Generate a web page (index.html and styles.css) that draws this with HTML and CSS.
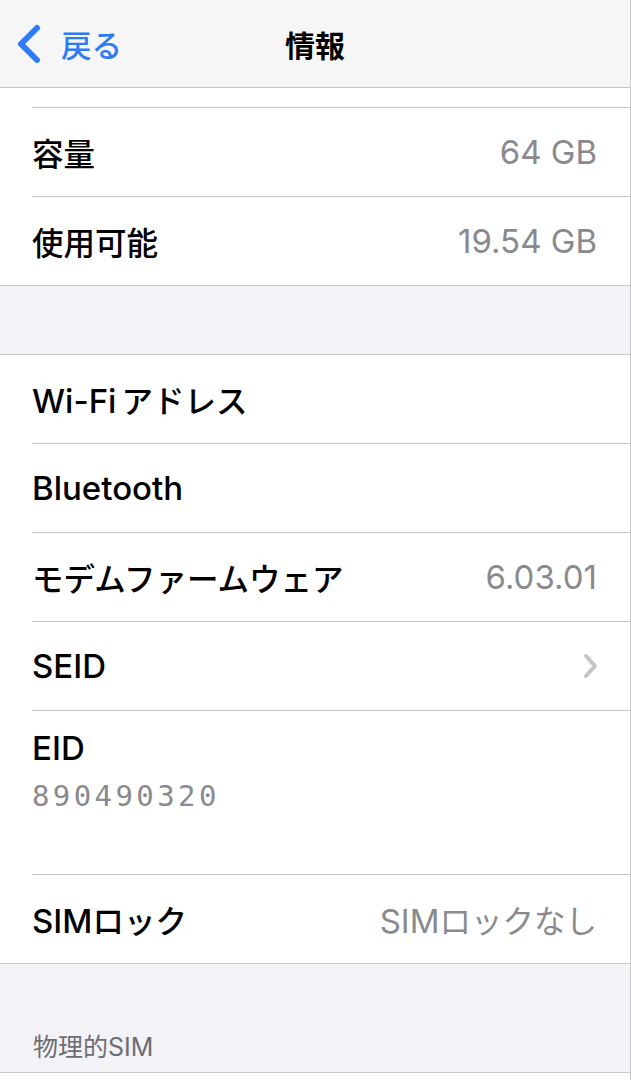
FILE: index.html
```html
<!DOCTYPE html>
<html lang="ja">
 <head>
  <meta charset="utf-8">
  <title>情報</title>
  <link rel="stylesheet" href="styles.css">
 </head>
 <body>
  <div class="screen">
   <nav class="navbar">
    <a class="back" href="#">
     <svg class="back-icon" width="28" height="40" viewBox="0 0 28 40"><path d="M22 4 L6 20 L22 36" fill="none" stroke="currentColor" stroke-width="6" stroke-linecap="round" stroke-linejoin="round"/></svg>
     <span>戻る</span>
    </a>
    <h1 class="title">情報</h1>
    <span></span>
   </nav>

   <section class="group">
    <div class="row row-cut"></div>
    <div class="row"><span class="label ja">容量</span><span class="value">64 GB</span></div>
    <div class="row"><span class="label ja">使用可能</span><span class="value">19.54 GB</span></div>
   </section>

   <div class="gap"></div>

   <section class="group">
    <div class="row"><span class="label">Wi-Fi<span class="ja spaced">アドレス</span></span><span class="value"></span></div>
    <div class="row"><span class="label">Bluetooth</span><span class="value"></span></div>
    <div class="row"><span class="label ja">モデムファームウェア</span><span class="value">6.03.01</span></div>
    <a class="row" href="#"><span class="label">SEID</span>
     <svg class="chevron" width="18" height="28" viewBox="0 0 18 28"><path d="M5 4 L14 14 L5 24" fill="none" stroke="currentColor" stroke-width="4" stroke-linecap="round" stroke-linejoin="round"/></svg>
    </a>
    <div class="row row-stack">
     <span class="label">EID</span>
     <span class="eid">890490320</span>
    </div>
    <div class="row"><span class="label">SIM<span class="ja">ロック</span></span><span class="value">SIM<span class="ja">ロックなし</span></span></div>
   </section>

   <div class="gap gap-header"><span class="header">物理的SIM</span></div>

   <section class="group group-open"></section>
  </div>
 </body>
</html>
```

FILE: styles.css
```css
html, body {
  margin:0; height:100%;
}
body {
  background-color:#f2f2f7;
  font-family: Inter, "Noto Sans CJK JP", sans-serif;
  color:#000;
}
.screen {
  width:631px; height:1080px; overflow:hidden;
  box-sizing:border-box; border-right:1px solid #c9c9cc;
  background-color:#f2f2f7;
}
a { color:inherit; text-decoration:none; }

/* navigation bar */
.navbar {
  display:grid; grid-template-columns:1fr auto 1fr; align-items:center;
  height:87px; border-bottom:1px solid #c4c4c6;
  background-color:#f6f6f6;
}
.back {
  display:flex; align-items:center; gap:18px;
  padding-left:15px; color:#2f7bf5;
  font-size:30.5px; font-weight:500;
}
.back-icon { display:block; }
.title {
  margin:0; font-size:30px; font-weight:700;
}

/* grouped list */
.group {
  background-color:#fff;
  border-bottom:1px solid #c8c7cc;
  padding-left:32px;
}
.gap + .group { border-top:1px solid #c8c7cc; }
.row {
  display:flex; justify-content:space-between; align-items:center;
  height:88px; padding-right:33px;
  border-bottom:1px solid #c8c7cc;
  font-size:33px; font-weight:500;
}
.row:last-child { border-bottom:none; }
.row-cut { height:19px; }
.ja { font-size:31.5px; }
.spaced { margin-left:5px; }
.value { color:#8a8a8e; font-weight:400; }
.chevron { color:#c4c4c7; margin-right:-2px; }

.row-stack {
  flex-direction:column; align-items:flex-start; justify-content:flex-start;
  height:164px; box-sizing:border-box; padding-top:18px;
}
.row-stack .label { line-height:38px; }
.eid {
  display:block; height:96px; line-height:58px;
  font-family:"DejaVu Sans Mono", monospace; font-size:29px; font-weight:400;
  letter-spacing:3.4px; color:#8a8a8e;
}

.gap { height:68px; }
.gap-header {
  height:108px; box-sizing:border-box;
  display:flex; align-items:flex-end;
  padding:0 0 9px 33px;
}
.header {
  font-size:25px; line-height:32px; color:#6d6d72;
}
.group-open { height:20px; border-bottom:none; }
```
